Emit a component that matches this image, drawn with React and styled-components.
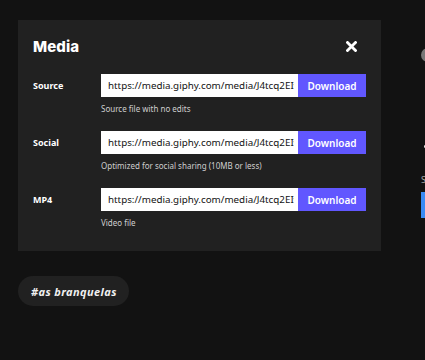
import React from 'react'
import styled, { createGlobalStyle } from 'styled-components'

const Global = createGlobalStyle`
body {
  margin: 0;
  background: #121212;
  font-family: "Noto Sans", "Liberation Sans", sans-serif;
  overflow: hidden;
}
`;

const Page = styled.div`
display: flex;
gap: 40px;
padding: 20px 0 0 18px;
width: 700px;
height: 360px;
box-sizing: border-box;
`;

const Main = styled.div`
width: 363px;
flex-shrink: 0;
`;

const Panel = styled.div`
background: #212121;
padding: 14px 15px 22px 15px;
display: flex;
flex-direction: column;
gap: 16px;
`;

const Header = styled.div`
display: flex;
justify-content: space-between;
align-items: center;
height: 24px;
padding-right: 9px;
`;

const Title = styled.h1`
margin: 0;
color: #fff;
font-family: Inter, "Noto Sans", sans-serif;
font-weight: 800;
font-size: 15px;
letter-spacing: 0.1px;
`;

const Close = styled.button`
border: 0;
background: none;
padding: 0;
width: 11px;
height: 11px;
cursor: pointer;
display: flex;
`;

const Row = styled.div`
display: grid;
grid-template-columns: 68px 1fr;
row-gap: 6px;
align-items: center;
`;

const Label = styled.div`
color: #fff;
font-weight: 700;
font-size: 9px;
`;

const Field = styled.div`
display: flex;
height: 23px;
`;

const Input = styled.input`
flex: 1;
min-width: 0;
border: 0;
outline: 0;
margin: 0;
padding: 0 4px 0 7px;
font-family: "Noto Sans", sans-serif;
font-size: 9.8px;
color: #121212;
background: #fff;
`;

const Button = styled.button`
width: 68px;
border: 0;
background: #6157ff;
color: #fff;
font-family: "Noto Sans", sans-serif;
font-weight: 600;
font-size: 10px;
cursor: pointer;
`;

const Hint = styled.div`
grid-column: 2;
color: #cfcfcf;
font-size: 8px;
line-height: 12px;
`;

const Tag = styled.div`
display: inline-flex;
align-items: center;
height: 30px;
margin-top: 25px;
padding: 0 12px 0 13px;
border-radius: 15px;
background: #212121;
color: #f0f0f0;
font-weight: 700;
font-style: italic;
font-size: 11px;
letter-spacing: 0.4px;
`;

const Side = styled.div`
display: flex;
flex-direction: column;
width: 240px;
`;

const Avatar = styled.div`
width: 14px;
height: 14px;
border-radius: 50%;
background: #777;
margin-top: 28px;
`;

const Dot = styled.div`
width: 3px;
height: 3px;
border-radius: 50%;
background: #eee;
margin-top: ${(props) => props.top}px;
margin-left: 3px;
`;

const SideLabel = styled.div`
color: #aaa;
font-size: 9px;
margin-top: 25px;
`;

const Blue = styled.div`
height: 26px;
background: #3a8bf5;
margin-top: 6px;
`;

const links = [
  { label: 'Source', hint: 'Source file with no edits' },
  { label: 'Social', hint: 'Optimized for social sharing (10MB or less)' },
  { label: 'MP4', hint: 'Video file' },
];

function App() {
  return (
    <>
      <Global />
      <Page>
        <Main>
          <Panel>
            <Header>
              <Title>Media</Title>
              <Close>
                <svg width="11" height="11" viewBox="0 0 11 11">
                  <path d="M1.5 1.5 L9.5 9.5 M9.5 1.5 L1.5 9.5" stroke="#fff" strokeWidth="2.8" strokeLinecap="square" />
                </svg>
              </Close>
            </Header>
            {links.map((l) => (
              <Row key={l.label}>
                <Label>{l.label}</Label>
                <Field>
                  <Input readOnly value="https://media.giphy.com/media/J4tcq2EIvWQXMJ5nYA/giphy.gif" />
                  <Button>Download</Button>
                </Field>
                <Hint>{l.hint}</Hint>
              </Row>
            ))}
          </Panel>
          <Tag>#as branquelas</Tag>
        </Main>
        <Side>
          <Avatar />
          <Dot top={83} />
          <SideLabel>Share</SideLabel>
          <Blue />
        </Side>
      </Page>
    </>
  )
}

export default App
